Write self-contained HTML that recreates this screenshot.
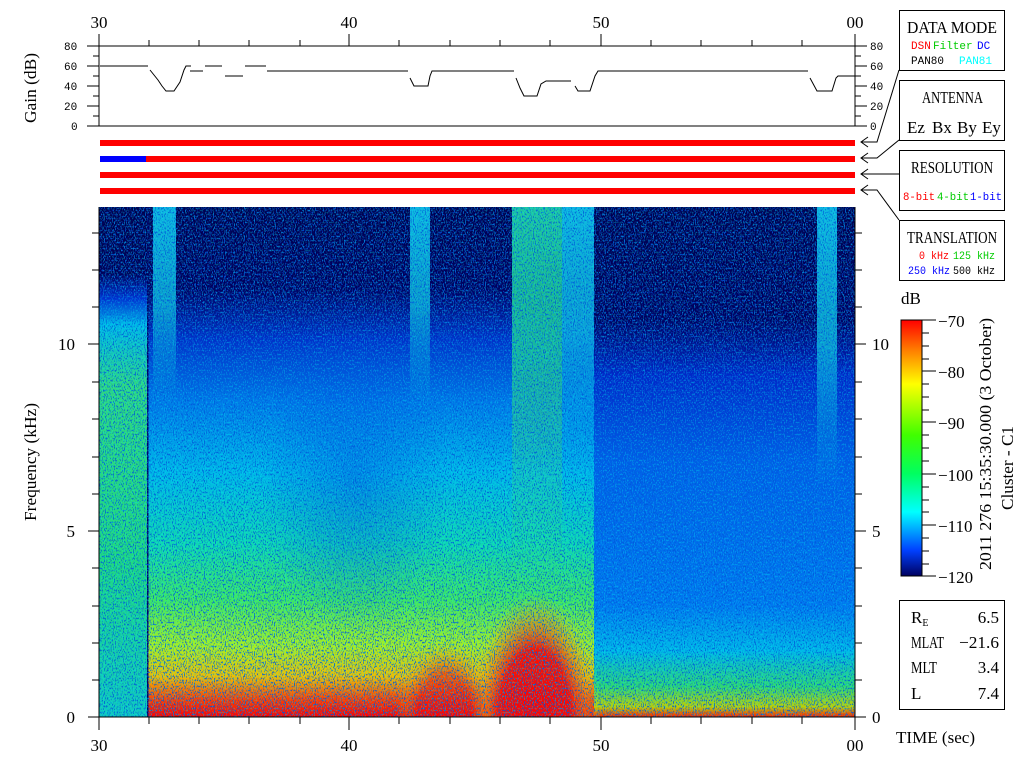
<!DOCTYPE html>
<html><head><meta charset="utf-8"><style>
html,body{margin:0;padding:0;background:#fff;width:1024px;height:768px;overflow:hidden}
svg{display:block}
.s{font-family:"Liberation Serif",serif;font-size:17px;fill:#000}
.m{font-family:"Liberation Mono",monospace;font-size:11px}
</style></head><body>
<svg width="1024" height="768" viewBox="0 0 1024 768" xmlns="http://www.w3.org/2000/svg">
<defs>
<linearGradient id="gL" x1="0" y1="0" x2="0" y2="1">
<stop offset="0" stop-color="#000050"/><stop offset="0.13" stop-color="#000058"/><stop offset="0.18" stop-color="#0030d0"/><stop offset="0.23" stop-color="#00b8e8"/><stop offset="0.35" stop-color="#30d880"/><stop offset="0.7" stop-color="#20d880"/><stop offset="1" stop-color="#10c8c0"/>
</linearGradient>
<linearGradient id="gM" x1="0" y1="0" x2="0" y2="1">
<stop offset="0" stop-color="#000050"/><stop offset="0.16" stop-color="#000060"/><stop offset="0.26" stop-color="#0030c8"/><stop offset="0.38" stop-color="#0078e8"/><stop offset="0.52" stop-color="#00b8e8"/><stop offset="0.66" stop-color="#10d8b0"/><stop offset="0.77" stop-color="#40e860"/><stop offset="0.86" stop-color="#a8f020"/><stop offset="0.92" stop-color="#f0c000"/><stop offset="0.965" stop-color="#ff4000"/><stop offset="1" stop-color="#ff0000"/>
</linearGradient>
<linearGradient id="gR" x1="0" y1="0" x2="0" y2="1">
<stop offset="0" stop-color="#000050"/><stop offset="0.22" stop-color="#000060"/><stop offset="0.33" stop-color="#0028c8"/><stop offset="0.5" stop-color="#0060e8"/><stop offset="0.78" stop-color="#0078f0"/><stop offset="0.87" stop-color="#00b8e8"/><stop offset="0.94" stop-color="#30d870"/><stop offset="0.98" stop-color="#c0d000"/><stop offset="1" stop-color="#ff2000"/>
</linearGradient>
<linearGradient id="gCol" x1="0" y1="0" x2="0" y2="1">
<stop offset="0" stop-color="#10b8e0"/><stop offset="0.5" stop-color="#10c0e0" stop-opacity="0.8"/><stop offset="1" stop-color="#00c0e0" stop-opacity="0"/>
</linearGradient>
<linearGradient id="gG" x1="0" y1="0" x2="0" y2="1">
<stop offset="0" stop-color="#20c8a0"/><stop offset="0.35" stop-color="#20d890" stop-opacity="0.8"/><stop offset="0.6" stop-color="#40e060" stop-opacity="0.3"/><stop offset="1" stop-color="#40e060" stop-opacity="0"/>
</linearGradient>
<radialGradient id="rR" cx="0.5" cy="1" r="0.5">
<stop offset="0" stop-color="#ff0000"/><stop offset="0.55" stop-color="#ff0800" stop-opacity="0.95"/><stop offset="0.8" stop-color="#ff8000" stop-opacity="0.5"/><stop offset="1" stop-color="#f0d000" stop-opacity="0"/>
</radialGradient>
<radialGradient id="rB" cx="0.5" cy="0.5" r="0.5">
<stop offset="0" stop-color="#0040e0" stop-opacity="0.4"/><stop offset="1" stop-color="#0040e0" stop-opacity="0"/>
</radialGradient>
<linearGradient id="bar" x1="0" y1="0" x2="0" y2="1">
<stop offset="0" stop-color="#ff0000"/><stop offset="0.12" stop-color="#ff8000"/><stop offset="0.25" stop-color="#ffff00"/><stop offset="0.45" stop-color="#40ff00"/><stop offset="0.6" stop-color="#00ff60"/><stop offset="0.75" stop-color="#00ffff"/><stop offset="0.9" stop-color="#0040ff"/><stop offset="1" stop-color="#000060"/>
</linearGradient>
<filter id="nz" x="0" y="0" width="1" height="1">
<feTurbulence type="fractalNoise" baseFrequency="0.9 0.5" numOctaves="1" seed="4"/>
<feColorMatrix type="matrix" values="0 0 0 0 0  0 0 0 0 0.1  0 0 0 0 0.7  9 0 0 0 -4.7"/>
</filter>
<filter id="nz2" x="0" y="0" width="1" height="1">
<feTurbulence type="fractalNoise" baseFrequency="0.9 0.5" numOctaves="1" seed="11"/>
<feColorMatrix type="matrix" values="0 0 0 0 0  0 0 0 0 0.9  0 0 0 0 0.9  9 0 0 0 -4.8"/>
</filter>
<clipPath id="sp"><rect x="99" y="207" width="756" height="510"/></clipPath>
</defs>

<!-- spectrogram -->
<g clip-path="url(#sp)">
<rect x="99" y="207" width="49" height="510" fill="url(#gL)"/>
<rect x="148" y="207" width="446" height="510" fill="url(#gM)"/>
<rect x="594" y="207" width="261" height="510" fill="url(#gR)"/>
<rect x="260" y="330" width="190" height="300" fill="url(#rB)"/>
<rect x="153" y="207" width="23" height="200" fill="url(#gCol)"/>
<rect x="410" y="207" width="20" height="200" fill="url(#gCol)"/>
<rect x="512" y="207" width="50" height="420" fill="url(#gG)"/>
<rect x="562" y="207" width="32" height="250" fill="url(#gCol)"/>
<rect x="817" y="207" width="20" height="280" fill="url(#gCol)"/>
<rect x="470" y="470" width="130" height="247" fill="url(#rR)"/>
<rect x="395" y="560" width="100" height="157" fill="url(#rR)" opacity="0.6"/>
<rect x="147" y="207" width="1.5" height="510" fill="#000060"/>
<rect x="99" y="207" width="756" height="510" filter="url(#nz)" opacity="0.8"/>
<rect x="99" y="207" width="756" height="510" filter="url(#nz2)" opacity="0.3"/>
</g>

<!-- spectrogram axes -->
<g stroke="#000" stroke-width="1" fill="none">
<line x1="99" y1="207" x2="99" y2="730"/>
<line x1="855" y1="207" x2="855" y2="730"/>
<line x1="99" y1="717" x2="855" y2="717"/>
<path d="M88 717H99M88 531H99M88 344H99M92 680H99M92 643H99M92 606H99M92 568H99M92 494H99M92 457H99M92 419H99M92 382H99M92 307H99M92 270H99M92 233H99"/>
<path d="M855 717H866M855 531H866M855 344H866M855 680H862M855 643H862M855 606H862M855 568H862M855 494H862M855 457H862M855 419H862M855 382H862M855 307H862M855 270H862M855 233H862"/>
<path d="M149 717V724M199 717V724M249 717V724M300 717V724M349 717V730M399 717V724M450 717V724M500 717V724M550 717V724M601 717V730M651 717V724M701 717V724M752 717V724M802 717V724"/>
</g>
<text class="s" x="99" y="751" text-anchor="middle">30</text>
<text class="s" x="349" y="751" text-anchor="middle">40</text>
<text class="s" x="601" y="751" text-anchor="middle">50</text>
<text class="s" x="855" y="751" text-anchor="middle">00</text>
<text class="s" x="75" y="723" text-anchor="end">0</text>
<text class="s" x="75" y="537" text-anchor="end">5</text>
<text class="s" x="75" y="350" text-anchor="end">10</text>
<text class="s" x="872" y="723">0</text>
<text class="s" x="872" y="537">5</text>
<text class="s" x="872" y="350">10</text>
<text class="s" transform="translate(36,462) rotate(-90)" text-anchor="middle" textLength="118" lengthAdjust="spacingAndGlyphs">Frequency (kHz)</text>
<text class="s" x="896" y="743" textLength="79" lengthAdjust="spacingAndGlyphs">TIME (sec)</text>

<!-- top axis & gain panel -->
<text class="s" x="99" y="28" text-anchor="middle">30</text>
<text class="s" x="349" y="28" text-anchor="middle">40</text>
<text class="s" x="601" y="28" text-anchor="middle">50</text>
<text class="s" x="855" y="28" text-anchor="middle">00</text>
<g stroke="#000" stroke-width="1" fill="none">
<line x1="87" y1="46" x2="867" y2="46"/>
<line x1="87" y1="126" x2="867" y2="126"/>
<line x1="99" y1="34" x2="99" y2="126"/>
<line x1="855" y1="34" x2="855" y2="126"/>
<path d="M149 40V46M199 40V46M249 40V46M300 40V46M349 34V46M399 40V46M450 40V46M500 40V46M550 40V46M601 34V46M651 40V46M701 40V46M752 40V46M802 40V46"/>
<path d="M87 66H99M87 86H99M87 106H99M93 56H99M93 76H99M93 96H99M93 116H99"/>
<path d="M855 66H867M855 86H867M855 106H867M855 56H861M855 76H861M855 96H861M855 116H861"/>
<path d="M100 66H148M150 70L158 80L162 86L166 91H174L180 82L184 70L186 66H191M190 71H203M205 66H222M225 76H243M245 66H266M267 71H408M410 78L414 86H428L430 76L432 71H514M516 78L520 88L524 96H537L541 84L546 81H571M575 86L578 91H590L595 76L598 71H808M810 78L817 91H832L836 78L838 76H855"/>
</g>
<g class="m" fill="#000">
<text x="64" y="50">80</text><text x="64" y="70">60</text><text x="64" y="90">40</text><text x="64" y="110">20</text><text x="71" y="130">0</text>
<text x="870" y="50">80</text><text x="870" y="70">60</text><text x="870" y="90">40</text><text x="870" y="110">20</text><text x="870" y="130">0</text>
</g>
<text class="s" transform="translate(36,88) rotate(-90)" text-anchor="middle" textLength="70" lengthAdjust="spacingAndGlyphs">Gain (dB)</text>

<!-- bars -->
<rect x="100" y="140" width="755" height="6" fill="#f00"/>
<rect x="100" y="156" width="755" height="6" fill="#f00"/>
<rect x="100" y="156" width="46" height="6" fill="#00f"/>
<rect x="100" y="172" width="755" height="6" fill="#f00"/>
<rect x="100" y="188" width="755" height="6" fill="#f00"/>

<!-- arrows -->
<g stroke="#000" stroke-width="1" fill="none">
<path d="M868 137L861 142L868 147M861 142H877L899 70"/>
<path d="M868 153L861 158L868 163M861 158H877L899 140"/>
<path d="M868 169L861 174L868 179M861 174H899"/>
<path d="M868 185L861 190L868 195M861 190H877L899 220"/>
<rect x="899.5" y="10.5" width="105" height="60"/>
<rect x="899.5" y="80.5" width="105" height="60"/>
<rect x="899.5" y="150.5" width="105" height="60"/>
<rect x="899.5" y="220.5" width="105" height="60"/>
<rect x="899.5" y="600.5" width="105" height="109"/>
</g>
<text class="s" x="907" y="33" font-size="16" textLength="90" lengthAdjust="spacingAndGlyphs">DATA MODE</text>
<text class="m" x="911" y="49" fill="#f00">DSN</text><text class="m" x="933" y="49" fill="#0c0">Filter</text><text class="m" x="977" y="49" fill="#00f">DC</text>
<text class="m" x="911" y="64" fill="#000">PAN80</text><text class="m" x="959" y="64" fill="#0ff">PAN81</text>
<text class="s" x="922" y="103" font-size="16" textLength="61" lengthAdjust="spacingAndGlyphs">ANTENNA</text>
<text class="s" x="907" y="133" fill="#f00" font-size="16">Ez</text><text class="s" x="932" y="133" fill="#0c0" font-size="16">Bx</text><text class="s" x="957" y="133" fill="#00f" font-size="16">By</text><text class="s" x="982" y="133" font-size="16">Ey</text>
<text class="s" x="911" y="173" font-size="16" textLength="82" lengthAdjust="spacingAndGlyphs">RESOLUTION</text>
<text class="m" x="903" y="200" fill="#f00" textLength="32" lengthAdjust="spacingAndGlyphs">8-bit</text><text class="m" x="937" y="200" fill="#0c0" textLength="32" lengthAdjust="spacingAndGlyphs">4-bit</text><text class="m" x="970" y="200" fill="#00f" textLength="32" lengthAdjust="spacingAndGlyphs">1-bit</text>
<text class="s" x="907" y="243" font-size="16" textLength="90" lengthAdjust="spacingAndGlyphs">TRANSLATION</text>
<text class="m" x="919" y="259" fill="#f00" textLength="30" lengthAdjust="spacingAndGlyphs">0 kHz</text><text class="m" x="953" y="259" fill="#0c0" textLength="42" lengthAdjust="spacingAndGlyphs">125 kHz</text>
<text class="m" x="908" y="274" fill="#00f" textLength="42" lengthAdjust="spacingAndGlyphs">250 kHz</text><text class="m" x="953" y="274" fill="#000" textLength="42" lengthAdjust="spacingAndGlyphs">500 kHz</text>

<!-- colorbar -->
<text class="s" x="901" y="304">dB</text>
<rect x="901" y="320" width="21" height="256" fill="url(#bar)" stroke="#000" stroke-width="1"/>
<g stroke="#000" stroke-width="1">
<path d="M922 320H936M922 371H936M922 422H936M922 474H936M922 525H936M922 576H936"/>
<path d="M922 333H929M922 346H929M922 359H929M922 384H929M922 397H929M922 410H929M922 435H929M922 448H929M922 461H929M922 487H929M922 500H929M922 512H929M922 538H929M922 551H929M922 564H929"/>
</g>
<g class="s">
<text x="938" y="327">−70</text><text x="938" y="378">−80</text><text x="938" y="429">−90</text><text x="938" y="481">−100</text><text x="938" y="532">−110</text><text x="938" y="583">−120</text>
</g>
<text class="s" transform="translate(991,444) rotate(-90)" text-anchor="middle" textLength="252" lengthAdjust="spacingAndGlyphs">2011 276 15:35:30.000 (3 October)</text>
<text class="s" transform="translate(1013,468) rotate(-90)" text-anchor="middle" textLength="84" lengthAdjust="spacingAndGlyphs">Cluster - C1</text>

<!-- info box -->
<g class="s">
<text x="911" y="623">R<tspan font-size="10" dy="3">E</tspan></text><text x="999" y="623" text-anchor="end">6.5</text>
<text x="911" y="648" textLength="33" lengthAdjust="spacingAndGlyphs">MLAT</text><text x="999" y="648" text-anchor="end" textLength="40" lengthAdjust="spacingAndGlyphs">−21.6</text>
<text x="911" y="673" textLength="26" lengthAdjust="spacingAndGlyphs">MLT</text><text x="999" y="673" text-anchor="end">3.4</text>
<text x="911" y="699">L</text><text x="999" y="699" text-anchor="end">7.4</text>
</g>
</svg>
</body></html>
